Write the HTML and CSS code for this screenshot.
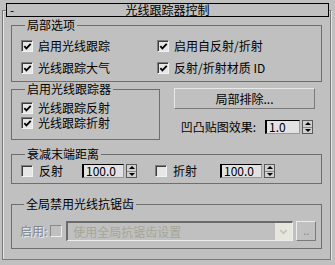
FILE: index.html
```html
<!DOCTYPE html>
<html lang="zh-CN">
<head>
<meta charset="utf-8">
<title>光线跟踪器控制</title>
<link rel="stylesheet" href="styles.css">
</head>
<body>
<div class="rollout">
  <div class="title"><span class="minus">-</span><span class="title-text">光线跟踪器控制</span><span></span></div>
  <div class="frame">
    <fieldset class="group g1">
      <legend>局部选项</legend>
      <div class="grid2">
        <label class="cb"><span class="box"><svg viewBox="0 0 10 10"><polyline points="1.5,4.5 3.8,7.2 8.6,2"/></svg></span>启用光线跟踪</label>
        <label class="cb"><span class="box"><svg viewBox="0 0 10 10"><polyline points="1.5,4.5 3.8,7.2 8.6,2"/></svg></span>启用自反射/折射</label>
        <label class="cb"><span class="box"><svg viewBox="0 0 10 10"><polyline points="1.5,4.5 3.8,7.2 8.6,2"/></svg></span>光线跟踪大气</label>
        <label class="cb"><span class="box"><svg viewBox="0 0 10 10"><polyline points="1.5,4.5 3.8,7.2 8.6,2"/></svg></span>反射/折射材质 ID</label>
      </div>
    </fieldset>
    <div class="mid">
      <fieldset class="group g2">
        <legend>启用光线跟踪器</legend>
        <label class="cb"><span class="box"><svg viewBox="0 0 10 10"><polyline points="1.5,4.5 3.8,7.2 8.6,2"/></svg></span><span class="cb-text">光线跟踪反射</span></label>
        <label class="cb"><span class="box"><svg viewBox="0 0 10 10"><polyline points="1.5,4.5 3.8,7.2 8.6,2"/></svg></span><span class="cb-text">光线跟踪折射</span></label>
      </fieldset>
      <div class="mid-right">
        <button class="btn">局部排除...</button>
        <div class="bump">
          <span class="bump-label">凹凸贴图效果:</span>
          <span class="num n-small">1.0</span>
          <span class="spin"><i class="up"></i><i class="down"></i></span>
        </div>
      </div>
    </div>
    <fieldset class="group g3">
      <legend>衰减末端距离</legend>
      <div class="atten">
        <div class="att-item">
          <span class="box"></span><span class="att-label">反射</span>
          <span class="num n-wide">100.0</span>
          <span class="spin"><i class="up"></i><i class="down"></i></span>
        </div>
        <div class="att-item">
          <span class="box"></span><span class="att-label wide">折射</span>
          <span class="num n-wide">100.0</span>
          <span class="spin"><i class="up"></i><i class="down"></i></span>
        </div>
      </div>
    </fieldset>
    <fieldset class="group g4">
      <legend>全局禁用光线抗锯齿</legend>
      <div class="aa">
        <span class="dis-label">启用:</span>
        <span class="box off"></span>
        <div class="combo">
          <span class="combo-text">使用全局抗锯齿设置</span>
          <span class="combo-btn"><svg viewBox="0 0 10 6"><polyline points="1.5,1 5,4.5 8.5,1"/></svg></span>
        </div>
        <span class="dots">..</span>
      </div>
    </fieldset>
  </div>
</div>
</body>
</html>
```
FILE: styles.css
```css
* { box-sizing: border-box; }

body {
  margin: 0;
  background: #c0c0c0;
  font: 12px/12px "Noto Sans CJK SC", "Noto Sans", sans-serif;
  color: #000;
}

.rollout {
  padding: 3px 0 0 2px;
  width: 335px;
}

.title {
  position: relative;
  z-index: 1;
  margin-left: 4px;
  width: 323px;
  height: 14px;
  border: 1px solid #000;
  background: #c0c0c0;
  display: grid;
  grid-template-columns: 1fr auto 1fr;
  align-items: center;
  line-height: 12px;
}

.minus { padding-left: 3px; }

.frame {
  margin-top: -7px;
  width: 329px;
  border: 1px solid #7a7a7a;
  box-shadow: inset 1px 1px 0 #e4e4e4, 1px 1px 0 #e4e4e4;
  padding: 7px 8px 10px;
}

.group {
  margin: 0;
  padding: 0;
  min-width: 0;
  border: 1px solid #6e6e6e;
}

.group legend {
  margin-left: 4px;
  padding: 0 2px;
  height: 14px;
  line-height: 14px;
}

.g1 { padding: 3px 0 2px 9px; }

.grid2 {
  display: grid;
  grid-template-columns: 136px 1fr;
  grid-auto-rows: 22px;
}

.cb {
  display: flex;
  align-items: center;
  gap: 5px;
  white-space: nowrap;
}

.box {
  flex: none;
  width: 12px;
  height: 12px;
  border: 1px solid;
  border-color: #7c7c7c #f2f2f2 #f2f2f2 #7c7c7c;
  box-shadow: inset 1px 1px 0 #3c3c3c;
  background: #e6e6e6;
  display: grid;
  place-items: center;
}

.box svg {
  width: 9px;
  height: 9px;
  margin: 1px 0 0 1px;
  fill: none;
  stroke: #000;
  stroke-width: 2;
}

.box.off {
  background: #c0c0c0;
  border-color: #8a8a8a #ececec #ececec #8a8a8a;
  box-shadow: none;
}

.mid {
  display: flex;
  align-items: flex-start;
}

.g2 {
  width: 149px;
  padding: 4px 0 9px 9px;
}

.g2 .cb {
  height: 15px;
  overflow: hidden;
}

.g2 .cb-text {
  height: 14px;
  line-height: 14px;
}

.mid-right {
  flex: 1;
  display: flex;
  flex-direction: column;
  padding-top: 6px;
}

.btn {
  margin-left: 14px;
  width: 141px;
  height: 21px;
  padding: 0;
  font: inherit;
  color: #000;
  background: #c0c0c0;
  border: 1px solid;
  border-color: #e8e8e8 #7a7a7a #7a7a7a #e8e8e8;
}

.bump {
  margin-top: 11px;
  align-self: flex-end;
  margin-right: 9px;
  display: flex;
  align-items: center;
  height: 14px;
}

.bump-label { margin-right: 9px; }

.num {
  height: 14px;
  border-style: solid;
  border-width: 1px 1px 1px 2px;
  border-color: #000 #9a9a9a #9a9a9a #000;
  background: #e2e2e2;
  line-height: 12px;
  padding-left: 2px;
}

.n-small { width: 35px; }
.n-wide { width: 42px; }

.spin {
  margin-left: 2px;
  width: 11px;
  height: 14px;
  border: 1px solid #5a5a5a;
  display: flex;
  flex-direction: column;
  background: #d0d0d0;
}

.spin i {
  flex: 1;
  display: grid;
  place-items: center;
}

.spin i.up { border-bottom: 1px solid #8a8a8a; }

.spin i::before {
  content: "";
  width: 0;
  height: 0;
  border-left: 3px solid transparent;
  border-right: 3px solid transparent;
}

.spin i.up::before { border-bottom: 3px solid #000; }
.spin i.down::before { border-top: 3px solid #000; }

.g3 {
  margin-top: 7px;
  padding: 3px 0 5px 9px;
}

.atten {
  display: grid;
  grid-template-columns: 134px auto;
  height: 14px;
}

.att-item {
  display: flex;
  align-items: center;
}

.att-label {
  margin-left: 6px;
  width: 43px;
}

.att-label.wide { width: 47px; }

.g4 {
  margin-top: 13px;
  padding: 10px 0 7px 8px;
}

.aa {
  display: flex;
  align-items: center;
  height: 20px;
}

.dis-label {
  color: #858585;
  text-shadow: 1px 1px 0 #ececec;
  margin-right: 3px;
}

.aa .box.off { margin-right: 4px; }

.combo {
  width: 227px;
  height: 20px;
  border-style: solid;
  border-width: 2px 1px 1px 2px;
  border-color: #6a6a6a #ececec #ececec #6a6a6a;
  display: flex;
  align-items: center;
}

.combo-text {
  flex: 1;
  padding-left: 5px;
  color: #a6a696;
}

.combo-btn {
  width: 17px;
  height: 17px;
  background: #e6e6dc;
  display: grid;
  place-items: center;
}

.combo-btn svg {
  width: 9px;
  height: 6px;
  fill: none;
  stroke: #c4c4b8;
  stroke-width: 2;
}

.dots {
  margin-left: 3px;
  width: 20px;
  height: 20px;
  border: 1px solid;
  border-color: #ececec #7a7a7a #7a7a7a #ececec;
  color: #8a8a8a;
  text-align: center;
  line-height: 16px;
  font-size: 11px;
}
```
